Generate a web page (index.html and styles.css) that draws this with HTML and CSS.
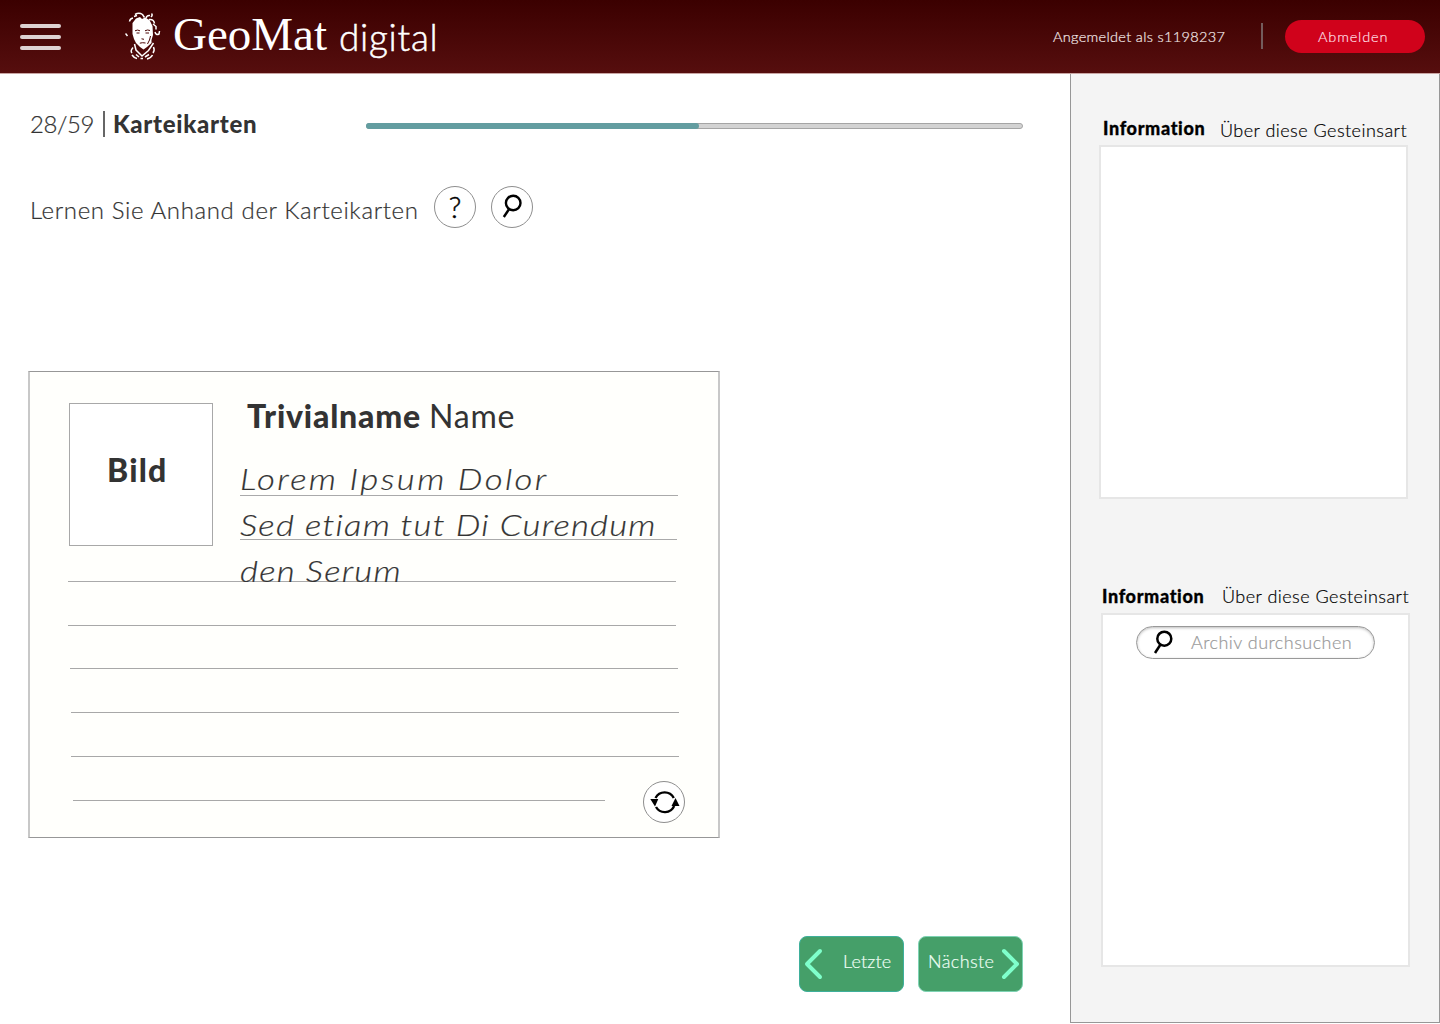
FILE: index.html
```html
<!DOCTYPE html>
<html lang="de">
<head>
<meta charset="utf-8">
<title>GeoMat digital</title>
<link rel="stylesheet" href="styles.css">
</head>
<body>
<header class="topbar">
  <div class="menu"><i></i><i></i><i></i></div>
  <svg class="head" viewBox="0 0 36 48" width="36" height="48">
    <path class="skin" d="M7.500 11L11 6.500L15 5L17 7L20 5.500L24.500 8L27.500 14L28 23L26.500 28L26.500 31L22 35L18.500 37.500L15 35L11 31L9 27L7.500 22Z"/>
    <path class="curl" d="M4.500 9.500Q5 6.500 8 6M9 4.500L12 3.500M10 2.500Q14 0 17.500 2.500L19.500 5.500M21 6.500Q21.500 3 25 3.500M26 5Q28 3 26.500 1.500M24 7.500Q29 7 29.500 11.500M28 12L31 14.500L31 17.500M30 20Q31 23.500 34 22L34.500 19M.5 21.500L2.500 24"/>
    <path class="ink" d="M10 18.800Q12.500 17.300 15 18.800M20 18.800Q22.500 17.300 25 18.500M11.500 21H14.500M20.500 21H24M16.500 26.800L19 27.300M14.800 31.200Q17.500 30.300 20.500 31M25.500 24L24.500 28L22.500 32"/>
    <path class="curl" d="M9.500 32L11 38L17 44L23.500 38.500L28.500 31M8 35.500Q5 39 7 41M28.500 35Q30 38 28 41M7 43Q9 46 12 46.500M11 42.500L14 45M20 45L24 42.500M22 47Q26 46 27.500 43M15.500 46.500H18"/>
  </svg>
  <div class="brand"><span class="brand-name">GeoMat</span><span class="brand-sub">digital</span></div>
  <span class="user">Angemeldet als s1198237</span>
  <i class="divider"></i>
  <button class="logout">Abmelden</button>
</header>
<div class="layout">
  <main class="main">
    <div class="status">
      <span class="count">28/59</span><i class="bar"></i><b class="title">Karteikarten</b>
      <div class="progress"><div class="progress-fill"></div></div>
    </div>
    <div class="task">
      <span class="task-text">Lernen Sie Anhand der Karteikarten</span>
      <button class="round help">?</button>
      <button class="round"><svg width="42" height="42" viewBox="0 0 42 42"><circle cx="22.200" cy="17" r="7.300"/><path d="M18.500 22.500L12.800 31"/></svg></button>
    </div>
    <section class="card">
      <div class="card-top">
        <div class="image">Bild</div>
        <div class="card-text">
          <h1><b>Trivialname</b><span>Name</span></h1>
          <p class="note n1"><span>Lorem Ipsum Dolor</span></p>
          <p class="note n2"><span>Sed etiam tut Di Curendum</span></p>
        </div>
      </div>
      <p class="note n3"><span>den Serum</span></p>
      <div class="rule r1"></div><div class="rule r2"></div><div class="rule r3"></div><div class="rule r4"></div>
      <div class="card-foot">
        <div class="rule last"></div>
        <button class="round flip"><svg width="42" height="42" viewBox="0 0 42 42"><path d="M12.500 17A10.400 10.800 0 0 1 30.800 17M31.200 25A10.400 10.800 0 0 1 13 26"/><path class="solid" d="M7.300 18H15.300L12 25.500ZM28.500 25H36.500L32.500 17Z"/></svg></button>
      </div>
    </section>
    <nav class="pager">
      <button class="prev"><svg width="20" height="32" viewBox="0 0 20 32"><path d="M16 3L3 16L16 29"/></svg><span>Letzte</span></button>
      <button class="next"><span>Nächste</span><svg width="20" height="32" viewBox="0 0 20 32"><path d="M4 3L17 16L4 29"/></svg></button>
    </nav>
  </main>
  <aside class="sidebar">
    <section class="info first">
      <div class="info-head"><b>Information</b><span>Über diese Gesteinsart</span></div>
      <div class="panel"></div>
    </section>
    <section class="info second">
      <div class="info-head"><b>Information</b><span>Über diese Gesteinsart</span></div>
      <div class="panel">
        <div class="search"><svg width="24" height="26" viewBox="0 0 24 26"><circle cx="13.300" cy="8.700" r="7"/><path d="M9.500 14.500L4 23"/></svg><span>Archiv durchsuchen</span></div>
      </div>
    </section>
  </aside>
</div>
</body>
</html>
```
FILE: styles.css
```css
*{box-sizing:border-box}
body{margin:0;width:1440px;height:1024px;overflow:hidden;background:#fff;color:#333;font-family:Lato,"Open Sans",sans-serif;font-weight:300;font-variant-ligatures:none;-webkit-text-stroke:.2px}
button{font:inherit;padding:0;margin:0;border:0;background:none;text-align:left}
span,b{white-space:nowrap}
b,h1,.image,.brand-name{-webkit-text-stroke:0}
p,h1{margin:0}
.topbar{display:flex;height:74px;background:linear-gradient(#3b0000,#560e0e 73px);border-bottom:1px solid #c9a5a3;color:#fff}
.menu{display:flex;flex-direction:column;gap:7px;margin:24px 64px 0 20px;width:41px}
.menu i{height:4px;border-radius:2px;background:#ded2d2}
.head{margin-top:12px;flex:none}
.skin{fill:#fff}
.curl{fill:none;stroke:#fff;stroke-width:1.5}
.ink{fill:none;stroke:#4a0505;stroke-width:1}
.brand{display:flex;margin-left:12px;width:868px}
.brand-name{width:166px;font:400 47px/68px "Liberation Serif",serif}
.brand-sub{font-size:37px;line-height:74px;letter-spacing:.7px;-webkit-text-stroke:.5px}
.user{width:208px;margin-left:12px;font-size:14.500px;line-height:74px;color:#f3e7e7;letter-spacing:.33px}
.divider{width:2px;height:26px;margin:23px 22px 0 0;background:#735c5c}
.logout{width:140px;height:33px;margin-top:20px;border-radius:17px;background:#d0021b;color:#ffdfe2;font-size:14.500px;line-height:31px;letter-spacing:.85px;padding-left:33px}
.layout{display:flex;height:949px}
.main{width:1070px;padding:35px 0 0 28px}
.status{display:flex;height:30px;padding-left:2px;font-size:24px;line-height:29px}
.count{width:73px;letter-spacing:-.4px}
.bar{width:2px;height:26px;margin:2px 8px 0 0;background:#666}
.title{width:253px;font-weight:900;letter-spacing:.7px}
.progress{width:657px;height:6px;margin-top:14px;border:1px solid #a5a5a5;border-radius:3px;background:#d3d3d3}
.progress-fill{width:333px;height:6px;margin:-1px;border-radius:3px;background:#639da0}
.task{display:flex;gap:15px;margin-top:47.400px;height:42px;font-size:24px;line-height:47px}
.task-text{width:391px;padding-left:2px;letter-spacing:.63px}
.round{width:42px;height:42px;border:1px solid #8e8e8e;border-radius:50%;background:#fff;flex:none;color:#000}
.round svg{display:block;margin:-1px;fill:none;stroke:#000;stroke-width:2.400}
.help{font-size:29px;line-height:40px;text-align:center;-webkit-text-stroke:.5px}
.card{width:692px;height:467px;margin-top:142.600px;padding:31px 0 0 39px;border:solid #979797;border-width:1px 2px;border-color:#979797 #c8c8c8;background:#fffffc}
.card-top{display:flex;height:142px}
.image{width:144px;height:143px;border:1px solid #a8a8a8;background:#fff;padding-left:37px;font-size:32px;font-weight:900;line-height:132px;margin-right:27px;letter-spacing:1.2px}
.card-text h1{display:flex;height:49px;padding-left:7px;font-size:32px;line-height:25px;font-weight:400;letter-spacing:.8px}
.card-text h1 b{width:182px;font-weight:900}
.note{font-size:29px;font-style:italic;height:44px;border-bottom:1px solid #aaa;width:437px}
.note span{display:inline-block;transform:scaleX(1.2);transform-origin:left;letter-spacing:1px}
.n1{line-height:54px;width:438px}
.note.n1 span{letter-spacing:2px}
.n2{line-height:58px}
.n3{width:608px;height:37px;margin-left:-1px;padding-left:172px;line-height:52px}
.rule{width:608px;height:44px;border-bottom:1px solid #a8a8a8}
.r1{margin-left:-1px}.r2{margin-left:1px;height:43px}.r3,.r4{margin-left:2px}
.card-foot{display:flex}
.last{width:532px;height:44px;margin-left:4px}
.flip{margin:24px 0 0 38px}
.flip .solid{fill:#000;stroke:none}
.pager{display:flex;gap:14px;margin:98px 0 0 771px}
.pager button{display:flex;width:105px;height:56px;border:1px solid #3eb09b;border-radius:8px;background:#459f69;color:#f0fff6;font-size:18px;line-height:49px;letter-spacing:.2px}
.pager .next{padding-left:9px;letter-spacing:.4px;border-color:#7ed3b4}
.pager svg{margin-top:11px;fill:none;stroke:#7fffcb;stroke-width:4;stroke-linecap:round;stroke-linejoin:round;flex:none}
.prev svg{margin-left:4px;margin-right:19px}
.next span{width:72px}
.sidebar{width:370px;border:1px solid #979797;border-top:0;background:#f4f4f4;color:#000;padding-top:39px}
.info-head{display:flex;height:32px;font-size:18px;line-height:30px;letter-spacing:.47px}
.info-head b{font-weight:900;width:117px;letter-spacing:.65px;-webkit-text-stroke:.3px}
.panel{height:354px;width:309px;border:2px solid #e6e6e6;background:#fff}
.first{margin-left:28px}
.first .info-head{padding-left:4px}
.first .info-head span{padding-top:2px}
.second{margin:82px 0 0 30px}
.second .info-head{padding-left:1px;line-height:31px}
.second .info-head b{width:120px}
.search{display:flex;width:239px;height:33px;margin:11px 0 0 33px;border:1.500px solid #999;border-radius:17px;box-shadow:inset 0 1px 3px #bbb;color:#999;font-size:18px;line-height:30px;letter-spacing:.47px}
.search svg{margin:3px 16px 0 14px;fill:none;stroke:#000;stroke-width:2.500}
```
